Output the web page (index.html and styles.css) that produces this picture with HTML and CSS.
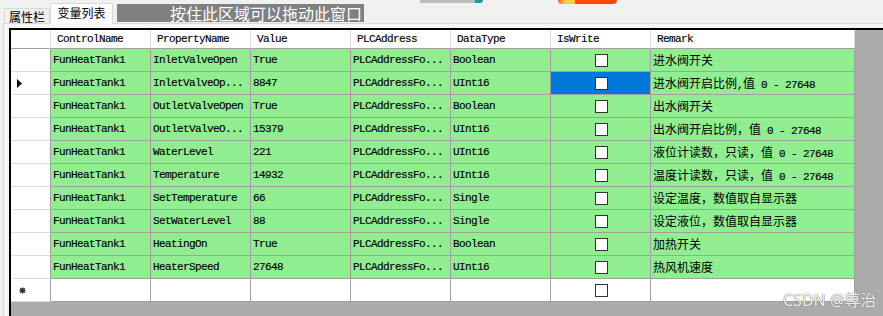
FILE: index.html
```html
<!DOCTYPE html>
<html lang="zh-CN">

<head>
    <meta charset="UTF-8">
    <title>变量列表</title>
    <link rel="stylesheet" href="styles.css">
</head>

<body>
    <div class="window">
        <span class="clip-bar"></span>
        <span class="clip-blob"></span>

        <div class="tabstrip">
            <div class="tab">属性栏</div>
            <div class="tab active">变量列表</div>
            <div class="drag">按住此区域可以拖动此窗口</div>
        </div>

        <div class="page">
            <div class="grid">
                <div class="row head">
                    <div class="rh"></div>
                    <div class="c">ControlName</div>
                    <div class="c">PropertyName</div>
                    <div class="c">Value</div>
                    <div class="c">PLCAddress</div>
                    <div class="c">DataType</div>
                    <div class="c">IsWrite</div>
                    <div class="c rm">Remark</div>
                </div>

                <div class="row">
                    <div class="rh"></div>
                    <div class="c">FunHeatTank1</div>
                    <div class="c">InletValveOpen</div>
                    <div class="c">True</div>
                    <div class="c">PLCAddressFo...</div>
                    <div class="c">Boolean</div>
                    <div class="c chk"><span class="box"></span></div>
                    <div class="c rm"><span class="cn">进水阀开关</span></div>
                </div>

                <div class="row">
                    <div class="rh"><svg class="arrow" width="5" height="9" viewBox="0 0 5 9"><path d="M0 0 L5 4.5 L0 9 Z" fill="#000"/></svg></div>
                    <div class="c">FunHeatTank1</div>
                    <div class="c">InletValveOp...</div>
                    <div class="c">8847</div>
                    <div class="c">PLCAddressFo...</div>
                    <div class="c">UInt16</div>
                    <div class="c chk selected"><span class="box"></span></div>
                    <div class="c rm"><span class="cn">进水阀开启比例</span>,<span class="cn">值</span> 0 - 27648</div>
                </div>

                <div class="row">
                    <div class="rh"></div>
                    <div class="c">FunHeatTank1</div>
                    <div class="c">OutletValveOpen</div>
                    <div class="c">True</div>
                    <div class="c">PLCAddressFo...</div>
                    <div class="c">Boolean</div>
                    <div class="c chk"><span class="box"></span></div>
                    <div class="c rm"><span class="cn">出水阀开关</span></div>
                </div>

                <div class="row">
                    <div class="rh"></div>
                    <div class="c">FunHeatTank1</div>
                    <div class="c">OutletValveO...</div>
                    <div class="c">15379</div>
                    <div class="c">PLCAddressFo...</div>
                    <div class="c">UInt16</div>
                    <div class="c chk"><span class="box"></span></div>
                    <div class="c rm"><span class="cn">出水阀开启比例，值</span> 0 - 27648</div>
                </div>

                <div class="row">
                    <div class="rh"></div>
                    <div class="c">FunHeatTank1</div>
                    <div class="c">WaterLevel</div>
                    <div class="c">221</div>
                    <div class="c">PLCAddressFo...</div>
                    <div class="c">UInt16</div>
                    <div class="c chk"><span class="box"></span></div>
                    <div class="c rm"><span class="cn">液位计读数，只读，值</span> 0 - 27648</div>
                </div>

                <div class="row">
                    <div class="rh"></div>
                    <div class="c">FunHeatTank1</div>
                    <div class="c">Temperature</div>
                    <div class="c">14932</div>
                    <div class="c">PLCAddressFo...</div>
                    <div class="c">UInt16</div>
                    <div class="c chk"><span class="box"></span></div>
                    <div class="c rm"><span class="cn">温度计读数，只读，值</span> 0 - 27648</div>
                </div>

                <div class="row">
                    <div class="rh"></div>
                    <div class="c">FunHeatTank1</div>
                    <div class="c">SetTemperature</div>
                    <div class="c">66</div>
                    <div class="c">PLCAddressFo...</div>
                    <div class="c">Single</div>
                    <div class="c chk"><span class="box"></span></div>
                    <div class="c rm"><span class="cn">设定温度，数值取自显示器</span></div>
                </div>

                <div class="row">
                    <div class="rh"></div>
                    <div class="c">FunHeatTank1</div>
                    <div class="c">SetWaterLevel</div>
                    <div class="c">88</div>
                    <div class="c">PLCAddressFo...</div>
                    <div class="c">Single</div>
                    <div class="c chk"><span class="box"></span></div>
                    <div class="c rm"><span class="cn">设定液位，数值取自显示器</span></div>
                </div>

                <div class="row">
                    <div class="rh"></div>
                    <div class="c">FunHeatTank1</div>
                    <div class="c">HeatingOn</div>
                    <div class="c">True</div>
                    <div class="c">PLCAddressFo...</div>
                    <div class="c">Boolean</div>
                    <div class="c chk"><span class="box"></span></div>
                    <div class="c rm"><span class="cn">加热开关</span></div>
                </div>

                <div class="row">
                    <div class="rh"></div>
                    <div class="c">FunHeatTank1</div>
                    <div class="c">HeaterSpeed</div>
                    <div class="c">27648</div>
                    <div class="c">PLCAddressFo...</div>
                    <div class="c">UInt16</div>
                    <div class="c chk"><span class="box"></span></div>
                    <div class="c rm"><span class="cn">热风机速度</span></div>
                </div>

                <div class="row new">
                    <div class="rh"><svg class="star" width="7" height="7" viewBox="0 0 7 7"><path d="M3.5 0.5 V6.5 M0.5 3.5 H6.5 M1.3 1.3 L5.7 5.7 M5.7 1.3 L1.3 5.7" stroke="#333" stroke-width="1.4"/></svg></div>
                    <div class="c"></div>
                    <div class="c"></div>
                    <div class="c"></div>
                    <div class="c"></div>
                    <div class="c"></div>
                    <div class="c chk"><span class="box"></span></div>
                    <div class="c rm"></div>
                </div>
            </div>
        </div>

        <div class="mark">CSDN @尊治</div>
    </div>
</body>

</html>
```

FILE: styles.css
```css
* {
    box-sizing: border-box;
    margin: 0;
    padding: 0;
}

body {
    background: #f0f0f0;
    font-family: "Noto Sans CJK SC", sans-serif;
    overflow: hidden;
}

.window {
    position: relative;
    width: 883px;
    height: 316px;
    display: flex;
    flex-direction: column;
}

/* bits of the window above, cut off by the screenshot */
.clip-bar {
    position: absolute;
    left: 420px;
    top: 0;
    width: 63px;
    height: 3px;
    background: linear-gradient(to right, #bcbcbc 88%, #1a9a96 88%);
    border-bottom-right-radius: 3px;
}

.clip-blob {
    position: absolute;
    left: 558px;
    top: 0;
    width: 59px;
    height: 4px;
    background: linear-gradient(to right, #ff5a1a 0, #ffd040 12%, #ffd040 28%, #ff4a00 30%, #ff4500 100%);
    border-radius: 0 0 10px 10px;
}

.tabstrip {
    height: 23px;
    display: flex;
    align-items: flex-end;
    padding-left: 4px;
    font-size: 12px;
}

.tab {
    width: 46px;
    height: 15px;
    border: 1px solid #d9d9d9;
    border-bottom: none;
    text-align: center;
    line-height: 15px;
    color: #000;
}

.tab.active {
    width: 63px;
    height: 21px;
    margin-bottom: -1px;
    background: #fff;
    line-height: 18px;
    position: relative;
    z-index: 1;
}

.drag {
    align-self: flex-start;
    margin: 4px 0 0 4px;
    width: 247px;
    height: 18px;
    background: #808080;
    color: #fff;
    font-size: 16px;
    line-height: 18px;
    text-align: right;
    padding-right: 2px;
}

.page {
    flex: 1;
    display: flex;
    margin-left: 3px;
    padding: 4px 0 0 5px;
    border-top: 1px solid #d9d9d9;
    border-left: 1px solid #d9d9d9;
    background: #f5f5f5;
}

.grid {
    flex: 1;
    background: #ababab;
    border-top: 2px solid #000;
    border-left: 2px solid #000;
    font-family: "Liberation Mono", monospace;
    font-size: 11px;
    letter-spacing: -0.6px;
    -webkit-text-stroke: 0.15px #000;
    color: #000;
}

.row {
    display: flex;
    height: 23px;
}

.row .c,
.row .rh {
    flex: none;
    border-right: 1px solid #a0a0a0;
    border-bottom: 1px solid #a0a0a0;
    white-space: nowrap;
    overflow: hidden;
}

.rh {
    width: 40px;
    background: #fff;
    display: flex;
    align-items: center;
    padding-left: 6px;
}

.row .rh {
    border-bottom-color: #dcdcdc;
}

.c {
    width: 100px;
    background: #90ee90;
    padding-left: 2px;
    line-height: 22px;
}

.c.rm {
    width: 204px;
}

.cn {
    font-family: "Noto Sans CJK SC", sans-serif;
    font-size: 12px;
    letter-spacing: 0;
    -webkit-text-stroke: 0;
}

.row.head {
    height: 19px;
}

.row.head .c {
    background: #fff;
    border-right-color: #dcdcdc;
    padding-left: 6px;
    line-height: 18px;
}

.row.head .rh {
    border-bottom-color: #a0a0a0;
    border-right-color: #dcdcdc;
}

.row.new .c {
    background: #fff;
}

.chk {
    display: flex;
    justify-content: center;
    align-items: center;
}

.chk.selected {
    background: #0078d7;
}

.box {
    width: 13px;
    height: 13px;
    background: #fff;
    border: 1px solid #333;
}

.star {
    margin-left: 2px;
}

.mark {
    position: absolute;
    left: 783px;
    top: 287px;
    font-family: "Noto Sans", "Noto Sans CJK SC", sans-serif;
    font-size: 16px;
    color: rgba(255, 255, 255, 0.9);
    text-shadow: 0 0 1px #7a7a7a, 0 0 1px #7a7a7a;
}
```
